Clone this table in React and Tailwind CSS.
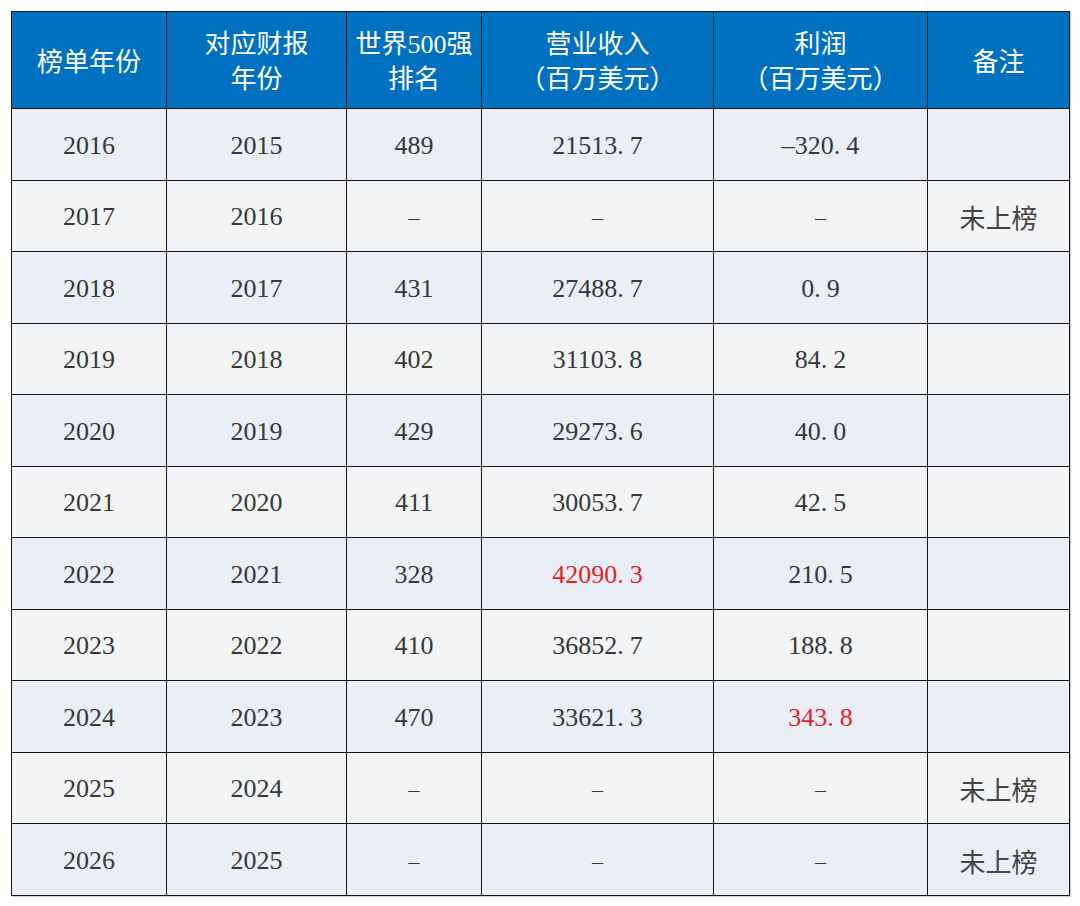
import React from 'react';

const rows = [
  { year: '2016', fy: '2015', rank: '489', revenue: '21513.7', profit: '-320.4', note: '' },
  { year: '2017', fy: '2016', rank: '-', revenue: '-', profit: '-', note: '未上榜' },
  { year: '2018', fy: '2017', rank: '431', revenue: '27488.7', profit: '0.9', note: '' },
  { year: '2019', fy: '2018', rank: '402', revenue: '31103.8', profit: '84.2', note: '' },
  { year: '2020', fy: '2019', rank: '429', revenue: '29273.6', profit: '40.0', note: '' },
  { year: '2021', fy: '2020', rank: '411', revenue: '30053.7', profit: '42.5', note: '' },
  { year: '2022', fy: '2021', rank: '328', revenue: '42090.3', profit: '210.5', note: '', redRevenue: true },
  { year: '2023', fy: '2022', rank: '410', revenue: '36852.7', profit: '188.8', note: '' },
  { year: '2024', fy: '2023', rank: '470', revenue: '33621.3', profit: '343.8', note: '', redProfit: true },
  { year: '2025', fy: '2024', rank: '-', revenue: '-', profit: '-', note: '未上榜' },
  { year: '2026', fy: '2025', rank: '-', revenue: '-', profit: '-', note: '未上榜' },
];

const headers = [
  ['榜单年份'],
  ['对应财报', '年份'],
  ['世界500强', '排名'],
  ['营业收入', '（百万美元）'],
  ['利润', '（百万美元）'],
  ['备注'],
];

const th = 'border-[1.5px] border-[#151515] text-white font-normal text-[26px] leading-[35px] pt-[4px] text-center align-middle';
const td = 'border-[1.5px] border-[#151515] text-center align-middle text-[26px] pt-[2px]';

// decimal point in the source font is as wide as a digit
const Num = ({ value }) => {
  if (value === '-') return <span className="text-[22px]">–</span>;
  const [a, b] = value.split('.');
  if (b === undefined) return value;
  return (
    <span>
      {a}.<span className="ml-[6px]">{b}</span>
    </span>
  );
};

export default function App() {
  return (
    <div className="bg-white w-[1080px] h-[906px] pl-[11px] pt-[11px]">
      <table
        className="table-fixed border-collapse w-[1058px] text-[#383838] shadow-[1px_1px_0_#cfcfcf]"
        style={{ fontFamily: '"Liberation Serif", "Noto Sans CJK SC", serif' }}
      >
        <colgroup>
          <col className="w-[155px]" />
          <col className="w-[180px]" />
          <col className="w-[135px]" />
          <col className="w-[232px]" />
          <col className="w-[214px]" />
          <col className="w-[142px]" />
        </colgroup>
        <thead>
          <tr className="h-[97px] bg-[#0070c0]">
            {headers.map((lines, i) => (
              <th key={i} className={th}>
                {lines.map((l, j) => (
                  <div key={j}>{l}</div>
                ))}
              </th>
            ))}
          </tr>
        </thead>
        <tbody>
          {rows.map((r, i) => (
            <tr key={r.year} className={`h-[71.5px] ${i % 2 === 0 ? 'bg-[#e9eef7]' : 'bg-[#f3f4f6]'}`}>
              <td className={td}>{r.year}</td>
              <td className={td}>{r.fy}</td>
              <td className={td}><Num value={r.rank} /></td>
              <td className={`${td} ${r.redRevenue ? 'text-[#ee1c1c]' : ''}`}><Num value={r.revenue} /></td>
              <td className={`${td} ${r.redProfit ? 'text-[#ee1c1c]' : ''}`}>
                {r.profit.startsWith('-') && r.profit.length > 1 ? (
                  <span>–<Num value={r.profit.slice(1)} /></span>
                ) : (
                  <Num value={r.profit} />
                )}
              </td>
              <td className={`${td} text-[25px] text-[#444]`} style={{ fontFamily: '"Noto Sans CJK SC", sans-serif' }}>
                {r.note}
              </td>
            </tr>
          ))}
        </tbody>
      </table>
    </div>
  );
}
